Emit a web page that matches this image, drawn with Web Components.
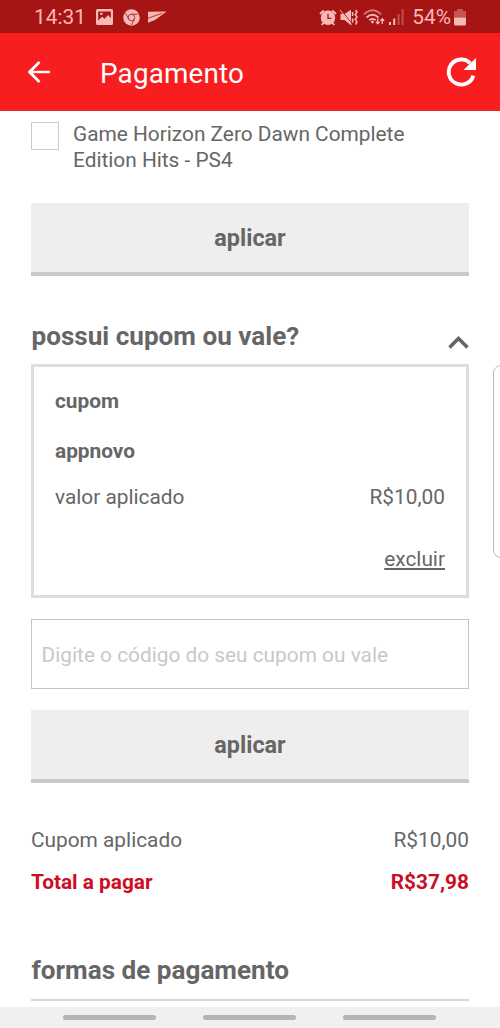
<!DOCTYPE html>
<html lang="pt-BR">
<head>
<meta charset="utf-8">
<meta name="viewport" content="width=device-width">
<title>Pagamento</title>
<style>
  html, body { margin: 0; height: 100%; background: #fff; overflow: hidden; }
  body { font-family: Roboto, "Liberation Sans", sans-serif; font-size: 20.83px; line-height: 26px; color: #666; }
</style>
</head>
<body>
<payment-screen></payment-screen>
<script>
const define = (name, html) => customElements.define(name, class extends HTMLElement {
  constructor() {
    super();
    const t = document.createElement('template');
    t.innerHTML = html;
    this.attachShadow({ mode: 'open' }).append(t.content.cloneNode(true));
  }
});

define('status-bar', `
<style>
  :host { display: flex; align-items: center; box-sizing: border-box; height: 33px; padding: 1px 34px 0 34px; background: #a71414; color: #f5b9b7; flex: none; }
  svg { display: block; flex: none; }
  .time { width: 62px; }
  .spacer { flex: 1; }
</style>
<span class="time">14:31</span>
<svg width="17" height="16" viewBox="0 0 17 16"><path fill="#f5b9b7" fill-rule="evenodd" d="M1.500 0h14A1.500 1.500 0 0 1 17 1.500v13a1.500 1.500 0 0 1-1.500 1.500h-14A1.500 1.500 0 0 1 0 14.500v-13A1.500 1.500 0 0 1 1.500 0zM2.200 2.500v9L6 7.800l2.600 2L12 6l2.800 3.200V2.500zM4.300 3.800h2.200v2.200H4.300z"/></svg>
<svg width="17" height="17" viewBox="0 0 17 17" style="margin-left:10px"><circle cx="8.500" cy="8.500" r="8.300" fill="#f5b9b7"/><g fill="none" stroke="#a71414" stroke-width=".8"><circle cx="8.500" cy="8.500" r="3.300"/><path d="M8.500 5.200H15.500M5.600 10 2.300 4M11.400 10 8.500 16"/></g></svg>
<svg width="19" height="13" viewBox="0 0 19 13" style="margin-left:8px"><path fill="#f5b9b7" d="M0 .8 18.500 .5 7.500 8.800 0 11.800z"/><path d="M0 7.200 14 2.300" stroke="#a71414" stroke-width=".8"/></svg>
<span class="spacer"></span>
<svg width="18" height="17" viewBox="0 0 18 17"><g fill="none" stroke="#f5b9b7"><path stroke-width="2" d="M1 5 4.800 1.500M17 5l-3.800-3.500M4.800 13.500 2.800 16M13.200 13.500l2 2.500"/></g><circle cx="9" cy="8.800" r="7.200" fill="#f5b9b7"/><path d="M9 4.800v4.500h3.400" fill="none" stroke="#a71414" stroke-width="1.300"/></svg>
<svg width="18" height="17" viewBox="0 0 18 17" style="margin-left:3px"><path fill="#f5b9b7" d="M.5 5h4L11 .8v15.400l-6.500-5.200h-4z"/><path d="M1.500 1.500 12 14.500" stroke="#a71414" stroke-width=".9"/><path d="M0 1 11.500 15.500" stroke="#f5b9b7" stroke-width="1"/><path d="M12.600 3v4M12.600 9.500v4M15.500 1l1.500 2-1.800 2.500L17 8l-1.800 2.500L17 13l-1.500 2.500" fill="none" stroke="#f5b9b7" stroke-width="1.500"/></svg>
<svg width="22" height="17" viewBox="0 0 22 17" style="margin-left:5px"><g fill="none" stroke="#f5b9b7" stroke-width="1.700"><path stroke-opacity=".6" d="M.8 5.500Q9.500-3 18.200 5.500"/><path d="M3.500 8.500q6-5.500 12 0M6.300 11.200q3.200-2.700 6.400 0"/></g><circle cx="9.500" cy="13" r="1.400" fill="#f5b9b7"/><path d="M14.800 9.500v5M13 12.800l1.800 2 1.800-2M19.300 15v-5M17.500 11.800l1.800-2 1.800 2" fill="none" stroke="#f5b9b7" stroke-width="1.300"/></svg>
<svg width="15" height="17" viewBox="0 0 15 17" style="margin-left:4px"><path fill="#f5b9b7" d="M0 13h2v3H0zM4.200 9.500h2V16h-2z"/><path fill="#f5b9b7" opacity=".35" d="M8.600 5h2v11h-2zM12.600 0h2v16h-2z"/></svg>
<span style="margin-left:8px">54%</span>
<svg width="12" height="17" viewBox="0 0 12 17" style="margin-left:3px"><path fill="#f5b9b7" opacity=".4" d="M3 0h6v2h3v6.500H0V2h3z"/><path fill="#f5b9b7" d="M0 8.500h12V15a1.500 1.500 0 0 1-1.500 1.500h-9A1.500 1.500 0 0 1 0 15z"/></svg>
`);

define('app-bar', `
<style>
  :host { display: flex; align-items: center; box-sizing: border-box; height: 78px; padding: 0 24px 0 28px; background: #f81e1f; color: #fff; border-bottom: 1px solid #e02a2a; flex: none; }
  svg { display: block; flex: none; }
  .title { flex: 1; margin: 4px 0 0 50px; font-size: 27.8px; line-height: 34px; letter-spacing: .2px; }
</style>
<svg width="22" height="22" viewBox="0 0 22 22"><path d="M22 11H2M11.500 1 1.500 11l10 10" fill="none" stroke="#fff" stroke-width="2.700"/></svg>
<span class="title"><slot></slot></span>
<svg width="30" height="30" viewBox="0 0 31 31"><path d="M28.300 19.200A13 13 0 1 1 25 6.300" fill="none" stroke="#fff" stroke-width="4"/><path d="M31 1v12.500H18z" fill="#fff"/></svg>
`);

define('check-option', `
<style>
  :host { display: flex; align-items: flex-start; gap: 14px; }
  .box { box-sizing: border-box; width: 28px; height: 28px; border: 1.400px solid #ccc; flex: none; }
  .label { width: 345px; line-height: 25.600px; }
</style>
<span class="box"></span><span class="label"><slot></slot></span>
`);

define('action-button', `
<style>
  :host { display: block; }
  button { display: block; box-sizing: border-box; width: 100%; height: 73px; margin: 0; padding: 1px 0 0; border: 0; border-bottom: 4px solid #c9c9c9; background: #eee; font: bold 23.400px/28px Roboto, "Liberation Sans", sans-serif; color: #666; text-align: center; }
</style>
<button><slot></slot></button>
`);

define('section-heading', `
<style>
  :host { display: flex; justify-content: space-between; height: 40px; font-weight: bold; font-size: 26.100px; line-height: 40px; }
</style>
<span><slot></slot></span><slot name="icon"></slot>
`);

define('value-row', `
<style>
  :host { display: flex; justify-content: space-between; height: 26px; }
</style>
<span><slot></slot></span><span><slot name="value"></slot></span>
`);

define('coupon-card', `
<style>
  :host { display: block; box-sizing: border-box; height: 234px; border: 3px solid #ddd; padding: 21px 21px 0; }
  b { display: block; }
  .code { margin-top: 24px; }
  value-row { margin-top: 20px; }
  .remove { margin-top: 36px; text-align: right; }
  a { color: inherit; text-decoration: underline; text-decoration-thickness: 1.500px; text-underline-offset: 2px; text-decoration-skip-ink: none; }
</style>
<b>cupom</b>
<b class="code"><slot></slot></b>
<value-row>valor aplicado<span slot="value">R$10,00</span></value-row>
<div class="remove"><a>excluir</a></div>
`);

define('code-field', `
<style>
  :host { display: block; }
  input { display: block; box-sizing: border-box; width: 100%; height: 70px; margin: 0; padding: 1px 9px 0 9.600px; border: 1.500px solid #c4c4c4; border-radius: 0; background: #fff; font: 20.830px Roboto, "Liberation Sans", sans-serif; outline: 0; }
  input::placeholder { color: #c8c8c8; opacity: 1; }
</style>
<input placeholder="Digite o código do seu cupom ou vale">
`);

define('nav-bar', `
<style>
  :host { display: flex; justify-content: center; gap: 47px; box-sizing: border-box; height: 21px; padding: 8px 1px 0 0; background: #f0f0f0; flex: none; }
  i { width: 93px; height: 5px; border-radius: 3px; background: #b5b5b5; }
</style>
<i></i><i></i><i></i>
`);

define('edge-handle', `
<style>
  :host { position: absolute; left: 493px; top: 365px; box-sizing: border-box; width: 20px; height: 193px; border: 1px solid #bbb; border-radius: 8px; background: #fff; }
</style>
`);

define('payment-screen', `
<style>
  :host { display: flex; flex-direction: column; position: relative; width: 500px; height: 1028px; overflow: hidden; }
  main { flex: 1; min-height: 0; overflow: hidden; padding: 11px 31px 0; }
  check-option { height: 52px; }
  .apply { margin-top: 28.500px; }
  .coupon-title { margin-top: 40.500px; }
  section-heading { padding-left: .5px; }
  coupon-card { margin-top: 8px; }
  code-field { margin-top: 21px; }
  .apply2 { margin-top: 21px; }
  .applied { margin-top: 44px; }
  .total { margin-top: 15.500px; font-weight: bold; color: #cb0d26; }
  .methods { margin-top: 55px; }
  hr { height: 2px; margin: 9.500px 0 0; border: 0; background: #d8d8d8; }
  .chevron { display: block; margin-top: 20px; }
</style>
<status-bar></status-bar>
<app-bar>Pagamento</app-bar>
<main>
  <check-option>Game Horizon Zero Dawn Complete Edition Hits - PS4</check-option>
  <action-button class="apply">aplicar</action-button>
  <section-heading class="coupon-title">possui cupom ou vale?<svg slot="icon" class="chevron" width="21" height="13" viewBox="0 0 21 13"><path d="M1.500 11.500 10.500 2.500l9 9" fill="none" stroke="#666" stroke-width="3.600"/></svg></section-heading>
  <coupon-card>appnovo</coupon-card>
  <code-field></code-field>
  <action-button class="apply2">aplicar</action-button>
  <value-row class="applied">Cupom aplicado<span slot="value">R$10,00</span></value-row>
  <value-row class="total">Total a pagar<span slot="value">R$37,98</span></value-row>
  <section-heading class="methods">formas de pagamento</section-heading>
  <hr>
</main>
<nav-bar></nav-bar>
<edge-handle></edge-handle>
`);
</script>
</body>
</html>
